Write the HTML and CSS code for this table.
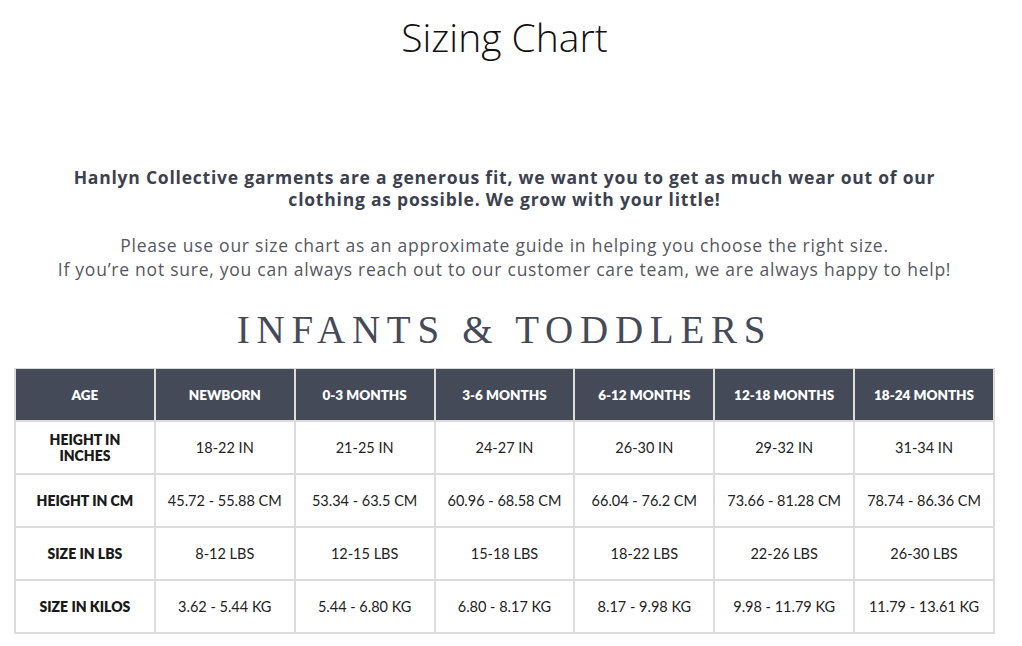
FILE: index.html
```html
<!DOCTYPE html>
<html>
<head>
<meta charset="utf-8">
<link rel="stylesheet" href="styles.css">
</head>
<body>
<h1 class="title">Sizing Chart</h1>
<section class="chart">
  <p class="lead">Hanlyn Collective garments are a generous fit, we want you to get as much wear out of our<br>clothing as possible. We grow with your little!</p>
  <p class="note">Please use our size chart as an approximate guide in helping you choose the right size.<br>If you’re not sure, you can always reach out to our customer care team, we are always happy to help!</p>
  <h2 class="heading">INFANTS &amp; TODDLERS</h2>
  <table class="sizes">
    <thead>
      <tr><th>AGE</th><th>NEWBORN</th><th>0-3 MONTHS</th><th>3-6 MONTHS</th><th>6-12 MONTHS</th><th>12-18 MONTHS</th><th>18-24 MONTHS</th></tr>
    </thead>
    <tbody>
      <tr><th>HEIGHT IN<br>INCHES</th><td>18-22 IN</td><td>21-25 IN</td><td>24-27 IN</td><td>26-30 IN</td><td>29-32 IN</td><td>31-34 IN</td></tr>
      <tr><th>HEIGHT IN CM</th><td>45.72 - 55.88 CM</td><td>53.34 - 63.5 CM</td><td>60.96 - 68.58 CM</td><td>66.04 - 76.2 CM</td><td>73.66 - 81.28 CM</td><td>78.74 - 86.36 CM</td></tr>
      <tr><th>SIZE IN LBS</th><td>8-12 LBS</td><td>12-15 LBS</td><td>15-18 LBS</td><td>18-22 LBS</td><td>22-26 LBS</td><td>26-30 LBS</td></tr>
      <tr><th>SIZE IN KILOS</th><td>3.62 - 5.44 KG</td><td>5.44 - 6.80 KG</td><td>6.80 - 8.17 KG</td><td>8.17 - 9.98 KG</td><td>9.98 - 11.79 KG</td><td>11.79 - 13.61 KG</td></tr>
    </tbody>
  </table>
</section>
</body>
</html>
```
FILE: styles.css
```css
html, body {
  margin: 0;
  padding: 0;
  background: #ffffff;
}
body {
  width: 1009px;
  font-family: "Lato", "Liberation Sans", sans-serif;
}
.title {
  margin: 0;
  padding-top: 13px;
  text-align: center;
  font-family: "Open Sans", sans-serif;
  font-weight: 300;
  font-size: 39px;
  line-height: 48px;
  color: #111111;
}
.chart {
  margin-top: 105px;
  display: flex;
  flex-direction: column;
  align-items: center;
}
.lead {
  margin: 0;
  text-align: center;
  font-family: "Open Sans", sans-serif;
  font-weight: 700;
  font-size: 17.5px;
  line-height: 22px;
  letter-spacing: 0.78px;
  color: #3c4150;
}
.note {
  margin: 23px 0 0;
  text-align: center;
  font-family: "Open Sans", sans-serif;
  font-weight: 400;
  font-size: 17.5px;
  line-height: 24px;
  letter-spacing: 0.75px;
  color: #555861;
}
.heading {
  margin: 29px 0 0;
  font-family: "Liberation Serif", serif;
  font-weight: 400;
  font-size: 39px;
  line-height: 40px;
  letter-spacing: 6.75px;
  color: #454a58;
}
.sizes {
  margin-top: 18px;
  border-collapse: collapse;
  table-layout: fixed;
  width: 981px;
  border: 1px solid #d6d6d6;
}
.sizes th, .sizes td {
  text-align: center;
  vertical-align: middle;
  padding: 0;
  border: 2px solid #dcdcdc;
  color: #222222;
  font-size: 14.5px;
}
.sizes thead th {
  height: 51px;
  background: #454a58;
  color: #ffffff;
  font-weight: 800;
  font-size: 13.5px;
  border-color: #dcdcdc;
  border-top: none;
}
.sizes tbody th {
  font-weight: 800;
  font-size: 14px;
  line-height: 16px;
  color: #1a1a1a;
}
.sizes tbody td,
.sizes tbody th {
  height: 51px;
}
```
